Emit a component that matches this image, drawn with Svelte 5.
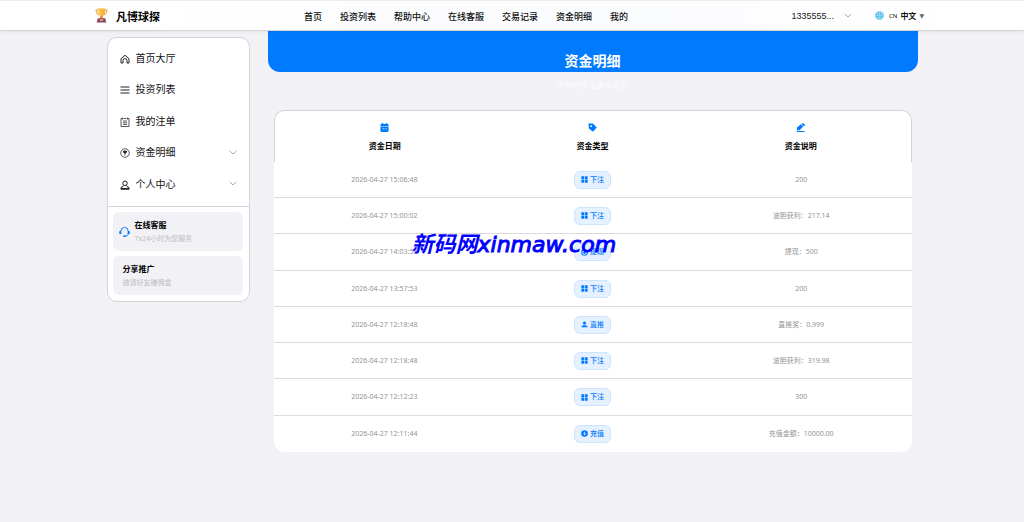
<script>
  const nav = ['首页', '投资列表', '帮助中心', '在线客服', '交易记录', '资金明细', '我的'];
  const menu = [
    { icon: 'home', label: '首页大厅' },
    { icon: 'lines', label: '投资列表' },
    { icon: 'note', label: '我的注单' },
    { icon: 'coin', label: '资金明细', more: true },
    { icon: 'user', label: '个人中心', more: true }
  ];
  const columns = [
    { icon: 'calendar', label: '资金日期' },
    { icon: 'tag', label: '资金类型' },
    { icon: 'pen', label: '资金说明' }
  ];
  const rows = [
    ['2026-04-27 15:06:48', 'grid', '下注', '200'],
    ['2026-04-27 15:00:02', 'grid', '下注', '波胆获利：217.14'],
    ['2026-04-27 14:03:52', 'withdraw', '提现', '提现：500'],
    ['2026-04-27 13:57:53', 'grid', '下注', '200'],
    ['2026-04-27 12:18:48', 'person', '直推', '直推奖：0.999'],
    ['2026-04-27 12:18:48', 'grid', '下注', '波胆获利：319.98'],
    ['2026-04-27 12:12:23', 'grid', '下注', '300'],
    ['2026-04-27 12:11:44', 'deposit', '充值', '充值金额：10000.00']
  ];
</script>

{#snippet chevron()}
  <svg class="chevron" viewBox="0 0 8 5" aria-hidden="true"><path d="M.7.8 4 4 7.3.8" /></svg>
{/snippet}

{#snippet icon(name)}
  <svg class="icon" viewBox="0 0 20 20" aria-hidden="true">
    {#if name === 'home'}
      <g class="line"><path d="M2 9.5 10 2.5l8 7V18h-4v-5a4 4 0 0 0-8 0v5H2z" /></g>
    {:else if name === 'lines'}
      <g class="line"><path d="M1 4h18M1 10h18M1 16h18" /></g>
    {:else if name === 'note'}
      <g class="line thin"><path d="M4 3H2v16h16V3h-2M7 3h6M5 1v4M15 1v4M6 8h8M6 11.500h8M6 15h8" /></g>
    {:else if name === 'coin'}
      <g class="line thin"><circle cx="10" cy="10" r="8.500" /><path d="M7 9h6M10 9v6" /><path d="M7 6h6v2l-3 3-3-3z" fill="currentColor" /></g>
    {:else if name === 'user'}
      <g class="line"><circle cx="10" cy="6.500" r="4.500" /><path d="M7 11 6 13 2 15v3.500h16V15l-4-2-1-2M2 17h16" /></g>
    {:else if name === 'calendar'}
      <path fill="currentColor" d="M3 2h1V0h3v2h6V0h3v2h1a2 2 0 0 1 2 2v3H1V4a2 2 0 0 1 2-2zM1 9h18v8a3 3 0 0 1-3 3H4a3 3 0 0 1-3-3z" />
      <path fill="currentColor" fill-opacity=".4" d="M1 7h18v2H1z" />
      <path d="M5 13h5m2 0h3" stroke="#fff" stroke-width="1.500" />
    {:else if name === 'tag'}
      <path fill="currentColor" fill-rule="evenodd" d="M1 1h10l8.500 9-8.500 9.500L2 12zM7 5a2 2 0 1 0 0 4 2 2 0 0 0 0-4z" />
    {:else if name === 'pen'}
      <path fill="currentColor" d="m11 3 5 5-8 8H2v-6zM12.500 2 14 1a2 2 0 0 1 3 0l2 2a2 2 0 0 1 0 3l-2 1zM2 18h17v2H2z" />
    {:else if name === 'grid'}
      <path fill="currentColor" d="M1 1h8v8H1zM11 1h8v8h-8zM1 11h8v8H1zM11 11h8v8h-8z" />
    {:else if name === 'person'}
      <circle cx="10" cy="6" r="4.500" fill="currentColor" /><path fill="currentColor" d="M1 18c0-5 4-6 9-6s9 1 9 6z" />
    {:else if name === 'withdraw'}
      <g class="line"><circle cx="10" cy="10" r="8" /><path d="M10 5v8m-4-4 4 4 4-4" /></g>
    {:else if name === 'deposit'}
      <circle cx="10" cy="10" r="9.500" fill="currentColor" /><path d="M10 5v8M7 10l3 4 3-4" fill="none" stroke="#fff" stroke-width="2" />
    {/if}
  </svg>
{/snippet}

<header>
  <div class="bar">
    <a class="brand" href="#home">
      <svg viewBox="0 0 24 28" aria-hidden="true">
        <path d="M6 4H2c0 5 2 8 7 9M18 4h4c0 5-2 8-7 9" fill="none" stroke="#f2a23c" stroke-width="2" />
        <path d="M5 1h14c0 8-1 12-5 14v5h-4v-5C6 13 5 9 5 1z" fill="#f8b23e" />
        <path d="M5 1h5c0 7 0 10 1 14-5-2-6-6-6-14z" fill="#ffd16a" />
        <path d="M14 15v5h-4v-5c2 1 2 1 4 0z" fill="#e57a32" />
        <path d="M5 19h14l2 8H3z" fill="#8b4660" />
        <path d="M9 21h6v3H9z" fill="#f5b35c" />
      </svg>
      <span>凡博球探</span>
    </a>
    <nav>
      {#each nav as item}<a href="#nav">{item}</a>{/each}
    </nav>
    <button class="account">1335555... {@render chevron()}</button>
    <button class="language">
      <svg viewBox="0 0 20 20" aria-hidden="true">
        <circle cx="10" cy="10" r="9.500" fill="#4db8ed" />
        <g fill="none" stroke="#c9efff" stroke-width="1"><ellipse cx="10" cy="10" rx="4.500" ry="9" /><path d="M10 1v18M1 10h18M3 5h14M3 15h14" /></g>
      </svg>
      <small>CN</small><b>中文</b><i>▼</i>
    </button>
  </div>
</header>

<div class="page">
  <aside>
    <ul>
      {#each menu as item}
        <li><a href="#menu">{@render icon(item.icon)}<span>{item.label}</span>{#if item.more}{@render chevron()}{/if}</a></li>
      {/each}
    </ul>
    <div class="cards">
      <a class="card" href="#service">
        <svg class="headset" viewBox="0 0 24 24" aria-hidden="true">
          <path d="M4 10a8 8 0 0 1 16 0M20 15c0 4-2 6-6 6" fill="none" stroke="currentColor" stroke-width="2" />
          <path d="M5 9v8H4a4 4 0 0 1 0-8zM19 9v8h1a4 4 0 0 0 0-8z" fill="currentColor" />
          <rect x="9" y="19" width="6" height="4" rx="2" fill="currentColor" />
        </svg>
        <span><strong>在线客服</strong><small>7x24小时为您服务</small></span>
      </a>
      <a class="card share" href="#share">
        <span><strong>分享推广</strong><small>邀请好友赚佣金</small></span>
      </a>
    </div>
  </aside>

  <main>
    <div class="banner">
      <h1>资金明细</h1>
      <p>详细的资金流水记录</p>
    </div>
    <div class="records">
      <table>
        <thead>
          <tr>
            {#each columns as col}<th scope="col">{@render icon(col.icon)}<span>{col.label}</span></th>{/each}
          </tr>
        </thead>
        <tbody>
          {#each rows as [date, kind, type, detail]}
            <tr>
              <td>{date}</td>
              <td><span class="badge">{@render icon(kind)}{type}</span></td>
              <td>{detail}</td>
            </tr>
          {/each}
        </tbody>
      </table>
      <div class="watermark">新码网<span>xinmaw.com</span></div>
    </div>
  </main>
</div>

<style>
  :global(body) {
    margin: 0;
    background: #f2f1f6;
    font-family: "Noto Sans", "Noto Sans CJK SC", sans-serif;
    color: #111;
  }
  a { color: inherit; text-decoration: none; }
  button { border: 0; background: none; padding: 0; color: inherit; font-family: inherit; cursor: pointer; }
  svg { display: block; flex: none; }
  .line { fill: none; stroke: #222; color: #222; stroke-width: 2; }
  .thin { stroke-width: 1.500; }
  .badge .line { stroke: #007aff; stroke-width: 3; }
  .chevron { width: 8px; height: 5px; fill: none; stroke: #aaa; stroke-width: 1; }

  header {
    position: relative;
    z-index: 2;
    box-sizing: border-box;
    background: linear-gradient(90deg, #fff 15%, #fbfcfe 45%, #fbfcfe 65%, #fff 90%);
    border-top: 1px solid #eee;
    border-bottom: 1px solid #d5d5d9;
    box-shadow: 0 1px 2px #0001;
  }
  .bar {
    display: grid;
    grid-template-columns: 211px 1fr auto auto;
    align-items: center;
    max-width: 838px;
    height: 29px;
    margin: 0 auto;
  }
  .brand { display: flex; align-items: center; gap: 8px; padding-left: 2px; font-size: 11px; font-weight: 700; color: #000; }
  .brand svg { width: 13px; height: 15px; }
  nav { display: flex; gap: 18px; padding-top: 1px; font-size: 9px; font-weight: 500; white-space: nowrap; }
  .account { display: flex; align-items: center; gap: 10px; margin-right: 15px; font: 9px "Liberation Sans", sans-serif; color: #222; }
  .language {
    display: flex;
    align-items: center;
    gap: 3px;
    height: 18px;
    padding: 0 7px 0 8px;
    border-radius: 6px;
    background: #fff;
    box-shadow: 0 0 2px #00000010;
  }
  .language svg { width: 9px; height: 9px; margin-right: 2px; }
  .language small { font-size: 6px; }
  .language b { font-size: 8px; }
  .language i { font: 6px "DejaVu Sans", sans-serif; color: #666; }

  .page {
    display: grid;
    grid-template-columns: 143px minmax(0, 1fr);
    align-items: start;
    gap: 18px;
    max-width: 811px;
    margin: 0 auto;
  }
  aside {
    margin-top: 6px;
    border: 1px solid #d4d4d8;
    border-radius: 10px;
    background: #fff;
    overflow: hidden;
  }
  ul { list-style: none; margin: 0; padding: 4px 12px 7px; }
  li a { display: flex; align-items: center; gap: 6px; height: 32px; font-size: 10px; line-height: 14px; }
  li:nth-child(odd) a { height: 31px; }
  li .icon { width: 10px; height: 10px; margin-top: 2px; }
  li .chevron { margin-left: auto; }
  .cards { display: grid; gap: 5px; padding: 5px 6px 6px 5px; border-top: 1px solid #d4d4d8; }
  .card {
    display: flex;
    align-items: center;
    gap: 5px;
    height: 39px;
    padding-left: 6px;
    border-radius: 6px;
    background: #f2f1f6;
  }
  .share { padding-left: 10px; }
  .headset { width: 11px; height: 12px; color: #007aff; }
  .card strong, .card small { display: block; line-height: 14px; }
  .card strong { font-size: 8px; color: #000; }
  .card small { font-size: 7px; color: #bcbcc0; }

  .banner {
    height: 41px;
    border-radius: 0 0 12px 12px;
    background: #007aff;
    color: #fff;
    text-align: center;
  }
  h1 { margin: 0; padding-top: 19px; font-size: 14px; line-height: 22px; }
  p { margin: 7px 0 0; font-size: 8px; line-height: 12px; color: #fcfcfd; }
  .records { position: relative; margin: 38px 6px 0; }
  table { width: 100%; table-layout: fixed; border-collapse: separate; border-spacing: 0; border-radius: 10px; background: #fff; }
  th { box-sizing: border-box; height: 52px; padding: 1px 0 0; border-top: 1px solid #d4d4d8; font-size: 8px; line-height: 12px; color: #000; }
  th:first-child { border-left: 1px solid #d4d4d8; border-top-left-radius: 10px; }
  th:last-child { border-right: 1px solid #d4d4d8; border-top-right-radius: 10px; }
  th .icon { width: 9px; height: 9px; margin: 0 auto 8px; color: #007aff; }
  td { box-sizing: border-box; height: 36px; padding: 0; border-bottom: 1px solid #dcdcde; font-size: 7px; line-height: 10px; text-align: center; color: #949494; }
  th:first-child, td:first-child { padding-left: 9px; }
  th:last-child, td:last-child { padding-right: 8px; }
  tr:nth-child(4n + 3) td { height: 37px; }
  tbody tr:last-child td { border-bottom-color: transparent; }
  .badge {
    display: inline-flex;
    align-items: center;
    gap: 2px;
    box-sizing: border-box;
    height: 18px;
    padding: 0 6px;
    border: 1px solid #cce4ff;
    border-radius: 6px;
    background: #e5f1ff;
    color: #007aff;
    font-weight: 500;
    vertical-align: middle;
  }
  .badge .icon { width: 7px; height: 7px; }
  .watermark {
    position: absolute;
    top: 117px;
    left: 138px;
    font-size: 22px;
    line-height: 32px;
    font-style: italic;
    font-weight: 700;
    color: #00f;
    white-space: nowrap;
    pointer-events: none;
  }
  .watermark span { font-family: "DejaVu Sans", sans-serif; font-weight: 400; -webkit-text-stroke: 1px #00f; }
</style>
